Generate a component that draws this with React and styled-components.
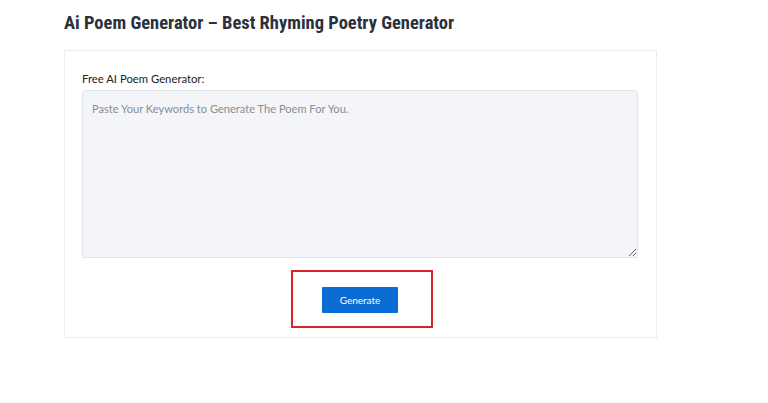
import React from "react";
import styled, { createGlobalStyle } from "styled-components";

const Global = createGlobalStyle`
  html, body { margin: 0; padding: 0; background: #fff; }
  body { font-family: "Lato", "Liberation Sans", sans-serif; }
`;

const Page = styled.div`
  padding: 11px 0 0 64px;
  width: 593px;
`;

const Title = styled.h1`
  margin: 0 0 15px 0;
  font-family: "Roboto Condensed", "DejaVu Sans Condensed", "Roboto", sans-serif;
  font-weight: 700;
  font-size: 18.5px;
  line-height: 24px;
  color: #2b303b;
  letter-spacing: 0;
`;

const Card = styled.div`
  border: 1px solid #ececec;
  padding: 20px 18px 9px 17px;
  display: flex;
  flex-direction: column;
`;

const Label = styled.label`
  font-size: 11.3px;
  line-height: 16px;
  color: #222;
  margin-bottom: 3px;
`;

const TextArea = styled.textarea`
  box-sizing: border-box;
  width: 100%;
  height: 168px;
  background: #f3f5f9;
  border: 1px solid #e4e7ed;
  border-radius: 2px;
  padding: 10px 9px;
  font-family: "Lato", "Liberation Sans", sans-serif;
  font-size: 11.1px;
  line-height: 16px;
  color: #333;
  resize: vertical;
  outline: none;
  &::placeholder { color: #8a8d93; }
`;

const Highlight = styled.div`
  box-sizing: border-box;
  align-self: center;
  margin: 12px 0 0 4px;
  width: 142px;
  height: 58px;
  border: 2px solid #d6262c;
  padding: 15px 0 0 29px;
  display: flex;
  align-items: flex-start;
`;

const Button = styled.button`
  width: 76px;
  height: 26px;
  background: #0a6bd3;
  color: #fff;
  border: none;
  border-radius: 1px;
  font-family: "Lato", "Liberation Sans", sans-serif;
  font-size: 10px;
  cursor: pointer;
`;

export default function App() {
  return (
    <>
      <Global />
      <Page>
        <Title>Ai Poem Generator – Best Rhyming Poetry Generator</Title>
        <Card>
          <Label>Free AI Poem Generator:</Label>
          <TextArea placeholder="Paste Your Keywords to Generate The Poem For You." />
          <Highlight>
            <Button>Generate</Button>
          </Highlight>
        </Card>
      </Page>
    </>
  );
}
